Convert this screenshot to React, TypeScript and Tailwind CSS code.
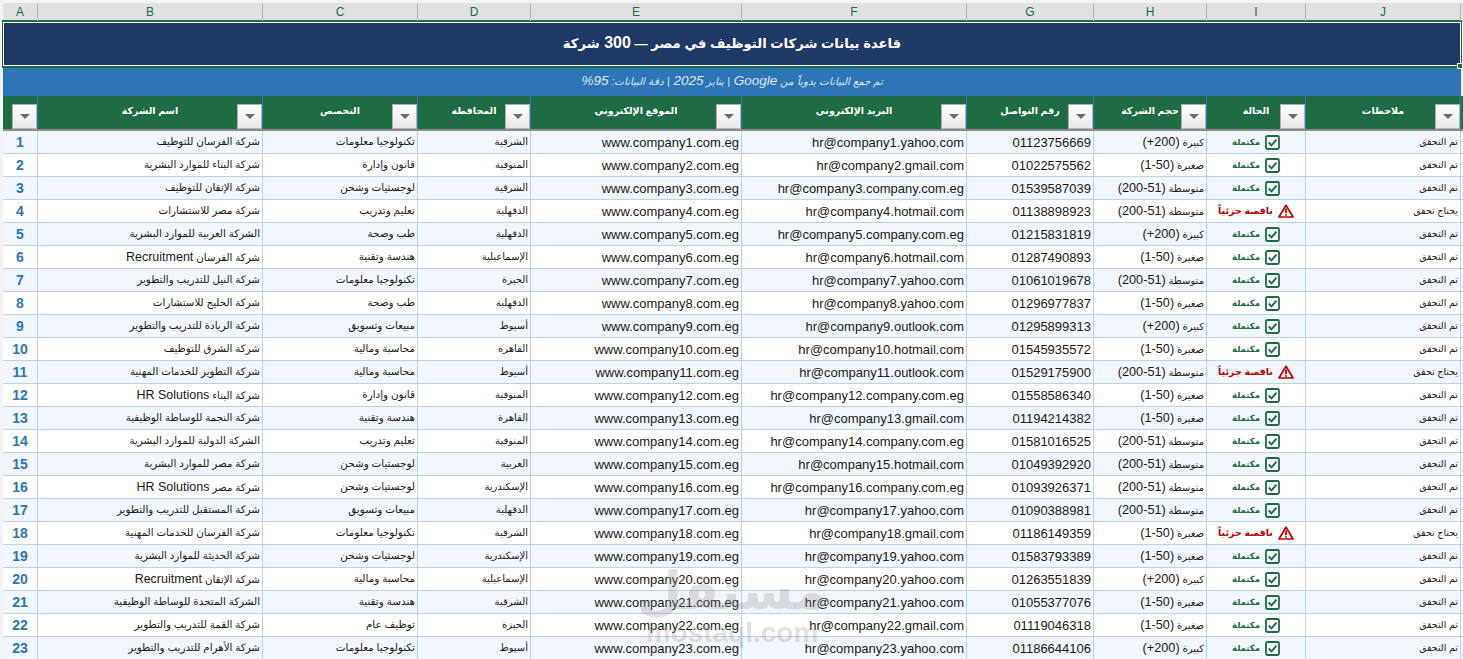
const grid = "grid grid-cols-[35px_225px_155px_113px_211px_225px_127px_113px_99px_155px]";

const letters = ["A", "B", "C", "D", "E", "F", "G", "H", "I", "J"];
const headers = [
  "",
  "اسم الشركة",
  "التخصص",
  "المحافظة",
  "الموقع الإلكتروني",
  "البريد الإلكتروني",
  "رقم التواصل",
  "حجم الشركة",
  "الحالة",
  "ملاحظات",
];

const big = "كبيرة (200+)";
const small = "صغيرة (50-1)";
const mid = "متوسطة (51-200)";

// name, field, city, mail domain, phone, size, partial
const rows: [string, string, string, string, string, string, boolean?][] = [
  ["شركة الفرسان للتوظيف", "تكنولوجيا معلومات", "الشرقية", "yahoo.com", "01123756669", big],
  ["شركة البناء للموارد البشرية", "قانون وإدارة", "المنوفية", "gmail.com", "01022575562", small],
  ["شركة الإتقان للتوظيف", "لوجستيات وشحن", "الشرقية", "company.com.eg", "01539587039", mid],
  ["شركة مصر للاستشارات", "تعليم وتدريب", "الدقهلية", "hotmail.com", "01138898923", mid, true],
  ["الشركة العربية للموارد البشرية", "طب وصحة", "الدقهلية", "company.com.eg", "01215831819", big],
  ["شركة الفرسان Recruitment", "هندسة وتقنية", "الإسماعيلية", "hotmail.com", "01287490893", small],
  ["شركة النيل للتدريب والتطوير", "تكنولوجيا معلومات", "الجيزة", "yahoo.com", "01061019678", mid],
  ["شركة الخليج للاستشارات", "طب وصحة", "الدقهلية", "yahoo.com", "01296977837", small],
  ["شركة الريادة للتدريب والتطوير", "مبيعات وتسويق", "أسيوط", "outlook.com", "01295899313", big],
  ["شركة الشرق للتوظيف", "محاسبة ومالية", "القاهرة", "hotmail.com", "01545935572", small],
  ["شركة التطوير للخدمات المهنية", "محاسبة ومالية", "أسيوط", "outlook.com", "01529175900", mid, true],
  ["شركة البناء HR Solutions", "قانون وإدارة", "المنوفية", "company.com.eg", "01558586340", small],
  ["شركة النجمة للوساطة الوظيفية", "هندسة وتقنية", "القاهرة", "gmail.com", "01194214382", small],
  ["الشركة الدولية للموارد البشرية", "تعليم وتدريب", "المنوفية", "company.com.eg", "01581016525", mid],
  ["شركة مصر للموارد البشرية", "لوجستيات وشحن", "الغربية", "hotmail.com", "01049392920", mid],
  ["شركة مصر HR Solutions", "لوجستيات وشحن", "الإسكندرية", "company.com.eg", "01093926371", mid],
  ["شركة المستقبل للتدريب والتطوير", "مبيعات وتسويق", "الدقهلية", "yahoo.com", "01090388981", mid],
  ["شركة الفرسان للخدمات المهنية", "تكنولوجيا معلومات", "الشرقية", "gmail.com", "01186149359", small, true],
  ["شركة الحديثة للموارد البشرية", "لوجستيات وشحن", "الإسكندرية", "yahoo.com", "01583793389", small],
  ["شركة الإتقان Recruitment", "محاسبة ومالية", "الإسماعيلية", "yahoo.com", "01263551839", big],
  ["الشركة المتحدة للوساطة الوظيفية", "هندسة وتقنية", "الشرقية", "yahoo.com", "01055377076", small],
  ["شركة القمة للتدريب والتطوير", "توظيف عام", "الجيزة", "gmail.com", "01119046318", small],
  ["شركة الأهرام للتدريب والتطوير", "تكنولوجيا معلومات", "أسيوط", "yahoo.com", "01186644106", big],
];

// the Arabic fallback runs wider than the Latin face, so Latin runs get their own size
function Mixed({ text, latin }: { text: string; latin: string }) {
  return (
    <>
      {text.split(/([A-Za-z0-9()%+-][A-Za-z0-9()%+ -]*)/).map((part, i) =>
        i % 2 === 1 ? (
          <span key={i} className={latin}>
            {part}
          </span>
        ) : (
          part
        ),
      )}
    </>
  );
}

function CheckIcon() {
  return (
    <svg width="15" height="15" viewBox="0 0 15 15" fill="none" className="shrink-0">
      <rect x="1" y="1" width="13" height="13" rx="1.5" stroke="#1e6b44" strokeWidth="1.8" />
      <path d="M3.8 7.5l2.7 2.8 5-5.6" stroke="#1e6b44" strokeWidth="1.9" />
    </svg>
  );
}

function WarnIcon() {
  return (
    <svg width="16" height="14" viewBox="0 0 16 14" fill="none" className="shrink-0">
      <path d="M8 1.3L15 13H1z" stroke="#c00000" strokeWidth="1.7" strokeLinejoin="round" />
      <path d="M8 4.5v4.8M8 10.2v1.6" stroke="#c00000" strokeWidth="1.8" />
    </svg>
  );
}

function FilterButton() {
  return (
    <div className="absolute right-0 bottom-0 w-[25px] h-[25px] flex items-center justify-center border border-[#b0b0b0] bg-gradient-to-b from-white to-[#e8e8e8]">
      <div className="w-0 h-0 border-x-[5px] border-x-transparent border-t-[5px] border-t-[#6b6b6b]" />
    </div>
  );
}

function Cell({ children, size }: { children: React.ReactNode; size: string }) {
  return (
    <div dir="rtl" className={`flex items-center px-[2px] border-r border-[#b8d3ea] whitespace-nowrap overflow-hidden ${size}`}>
      <span>{children}</span>
    </div>
  );
}

export default function App() {
  return (
    <div className="relative h-[659px] w-[1463px] overflow-hidden bg-[#f3f3f3] pt-[3px] pl-[3px] font-['Liberation_Sans','DejaVu_Sans',sans-serif] text-[#1a1a1a]">
      {/* column letters */}
      <div className={`${grid} h-[17px] bg-[#e1e1e1] text-[12px] text-[#1e6b44]`}>
        {letters.map((l) => (
          <div key={l} className="flex items-center justify-center border-r border-[#b5b5b5]">
            {l}
          </div>
        ))}
      </div>

      {/* title */}
      <div className="-ml-px w-[1460px] h-[48px] border-y-2 border-x border-[#1e6b44]">
        <div dir="rtl" className="h-full border border-white bg-[#1f3864] flex items-center justify-center pb-[3px] text-[13.2px] font-bold text-white">
          <span>
            <Mixed text="قاعدة بيانات شركات التوظيف في مصر — 300 شركة" latin="text-[16px]" />
          </span>
        </div>
      </div>

      {/* subtitle */}
      <div dir="rtl" className="w-[1458px] h-[28px] bg-[#2e75b6] flex items-center justify-center pb-[2px] text-[10.3px] italic text-[#dbe9f5]">
        <span>
          <Mixed text="تم جمع البيانات يدوياً من Google | يناير 2025 | دقة البيانات: 95%" latin="text-[13.5px]" />
        </span>
      </div>

      {/* table header */}
      <div className={`${grid} h-[35px] bg-[#1e6b44] border-b-2 border-[#8c8c8c] text-[9.5px] font-bold text-white`}>
        {headers.map((h, i) => (
          <div key={i} dir="rtl" className="relative flex items-center justify-center pb-[2px] border-r border-[#2e75b6]">
            {h}
            <FilterButton />
          </div>
        ))}
      </div>

      {/* rows */}
      {rows.map((r, i) => {
        const n = i + 1;
        return (
          <div key={n} className={`${grid} h-[23px] border-b border-[#b8d3ea] ${i % 2 === 0 ? "bg-[#f0f6fb]" : "bg-white"}`}>
            <div className="flex items-center justify-center border-r border-[#b8d3ea] text-[14px] font-bold text-[#2e75b6]">
              {n}
            </div>
            <Cell size="text-[10.3px]">
              <Mixed text={r[0]} latin="text-[12.5px]" />
            </Cell>
            <Cell size="text-[10.4px]">{r[1]}</Cell>
            <Cell size="text-[10px] pb-px">{r[2]}</Cell>
            <Cell size="text-[13px] pt-px">{`www.company${n}.com.eg`}</Cell>
            <Cell size="text-[13px] pt-px">{`hr@company${n}.${r[3]}`}</Cell>
            <Cell size="text-[13px] pt-px">{r[4]}</Cell>
            <Cell size="text-[10px] pt-px">
              <Mixed text={r[5]} latin="text-[12.7px]" />
            </Cell>
            <div className="flex items-center justify-center gap-[5px] border-r border-[#b8d3ea] font-bold">
              {r[6] ? (
                <>
                  <span dir="rtl" className="text-[9.5px] text-[#c00000]">ناقصة جزئياً</span>
                  <WarnIcon />
                </>
              ) : (
                <>
                  <span dir="rtl" className="text-[8.5px] text-[#1e6b44]">مكتملة</span>
                  <CheckIcon />
                </>
              )}
            </div>
            <Cell size="text-[9.5px]">{r[6] ? "يحتاج تحقق" : "تم التحقق"}</Cell>
          </div>
        );
      })}

      {/* selection handle */}
      <div className="absolute left-[1457px] top-[63px] w-[6px] h-[6px] bg-[#1e6b44] border border-white" />

      {/* watermark */}
      <div className="absolute left-[632px] top-[562px] w-[200px] flex flex-col items-center pointer-events-none text-[#8a8a8a]/25 font-bold">
        <span dir="rtl" className="text-[52px] leading-[58px]">مستقل</span>
        <span className="text-[28px] leading-[26px]">mostaql.com</span>
      </div>
    </div>
  );
}
